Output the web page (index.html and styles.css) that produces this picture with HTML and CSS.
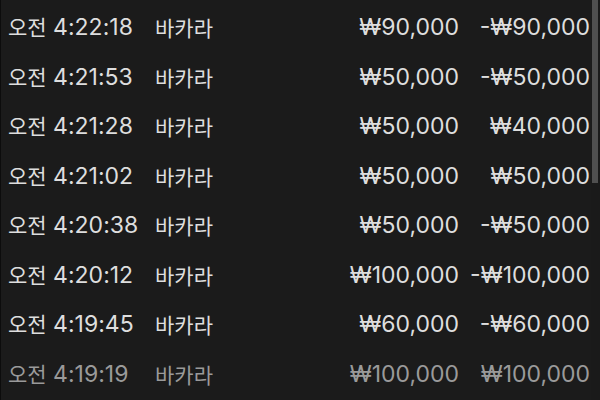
FILE: index.html
```html
<!DOCTYPE html>
<html lang="ko">
<head>
<meta charset="utf-8">
<link rel="stylesheet" href="styles.css">
</head>
<body>
<div class="panel">
  <div class="list">
    <div class="row"><span class="time"><span class="ko">오전</span> 4:22:18</span><span class="game ko">바카라</span><span class="bet">₩90,000</span><span class="result">-₩90,000</span></div>
    <div class="row"><span class="time"><span class="ko">오전</span> 4:21:53</span><span class="game ko">바카라</span><span class="bet">₩50,000</span><span class="result">-₩50,000</span></div>
    <div class="row"><span class="time"><span class="ko">오전</span> 4:21:28</span><span class="game ko">바카라</span><span class="bet">₩50,000</span><span class="result">₩40,000</span></div>
    <div class="row"><span class="time"><span class="ko">오전</span> 4:21:02</span><span class="game ko">바카라</span><span class="bet">₩50,000</span><span class="result">₩50,000</span></div>
    <div class="row"><span class="time"><span class="ko">오전</span> 4:20:38</span><span class="game ko">바카라</span><span class="bet">₩50,000</span><span class="result">-₩50,000</span></div>
    <div class="row"><span class="time"><span class="ko">오전</span> 4:20:12</span><span class="game ko">바카라</span><span class="bet">₩100,000</span><span class="result">-₩100,000</span></div>
    <div class="row"><span class="time"><span class="ko">오전</span> 4:19:45</span><span class="game ko">바카라</span><span class="bet">₩60,000</span><span class="result">-₩60,000</span></div>
    <div class="row faded"><span class="time"><span class="ko">오전</span> 4:19:19</span><span class="game ko">바카라</span><span class="bet">₩100,000</span><span class="result">₩100,000</span></div>
  </div>
  <div class="scrollbar"><div class="thumb"></div></div>
</div>
</body>
</html>
```
FILE: styles.css
```css
html, body {
  margin: 0;
  padding: 0;
  background: #1b1b1b;
}
body {
  font-family: Inter, "Noto Sans CJK KR", sans-serif;
  color: #dedede;
  font-size: 23px;
}
.panel {
  position: relative;
  width: 600px;
  height: 400px;
  overflow: hidden;
  border-left: 1px solid #0c0c0c;
  box-sizing: border-box;
}
.list {
  display: flex;
  flex-direction: column;
  padding-top: 3px;
}
.row {
  display: grid;
  grid-template-columns: 147px 1fr 150px 131px;
  align-items: center;
  height: 49.5px;
  padding-left: 7px;
  padding-right: 10px;
  line-height: 1;
}
.ko {
  font-family: "Noto Sans CJK KR", sans-serif;
  font-size: 21px;
}
.time, .game { white-space: nowrap; }
.bet, .result { text-align: right; white-space: nowrap; }
.faded { color: #9a9a9a; }
.scrollbar {
  position: absolute;
  top: 0;
  right: 0;
  width: 9px;
  height: 400px;
  background: #1a1a1a;
}
.thumb {
  width: 6px;
  margin-left: 1px;
  height: 183px;
  background: #4f4f4f;
}
```
